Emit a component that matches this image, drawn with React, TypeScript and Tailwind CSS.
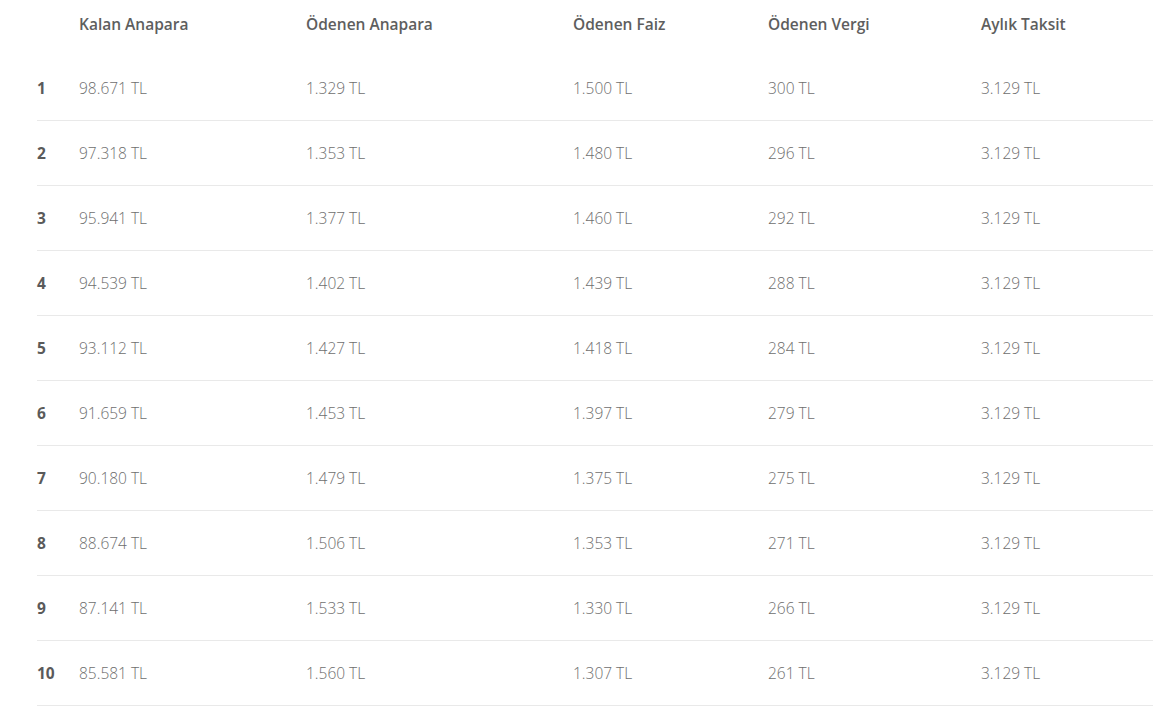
const rows = [
  ['98.671 TL', '1.329 TL', '1.500 TL', '300 TL', '3.129 TL'],
  ['97.318 TL', '1.353 TL', '1.480 TL', '296 TL', '3.129 TL'],
  ['95.941 TL', '1.377 TL', '1.460 TL', '292 TL', '3.129 TL'],
  ['94.539 TL', '1.402 TL', '1.439 TL', '288 TL', '3.129 TL'],
  ['93.112 TL', '1.427 TL', '1.418 TL', '284 TL', '3.129 TL'],
  ['91.659 TL', '1.453 TL', '1.397 TL', '279 TL', '3.129 TL'],
  ['90.180 TL', '1.479 TL', '1.375 TL', '275 TL', '3.129 TL'],
  ['88.674 TL', '1.506 TL', '1.353 TL', '271 TL', '3.129 TL'],
  ['87.141 TL', '1.533 TL', '1.330 TL', '266 TL', '3.129 TL'],
  ['85.581 TL', '1.560 TL', '1.307 TL', '261 TL', '3.129 TL'],
]

const headers = ['Kalan Anapara', 'Ödenen Anapara', 'Ödenen Faiz', 'Ödenen Vergi', 'Aylık Taksit']

// sütun genişlikleri
const cols = 'grid grid-cols-[42px_227px_267px_195px_213px_172px]'

export default function App() {
  return (
    <div className="min-h-screen bg-white pl-[37px] font-['Open_Sans',sans-serif]">
      <div className={`${cols} h-[56px] pt-[13px] text-[15.5px] font-semibold text-[#5e5e5e] leading-[22px]`}>
        <div />
        {headers.map((h) => (
          <div key={h}>{h}</div>
        ))}
      </div>
      {rows.map((r, i) => (
        <div
          key={i}
          className={`${cols} h-[65px] items-center border-b border-[#e9e9e9] text-[15.5px] leading-[22px]`}
        >
          <div className="font-bold text-[#5a5a5a]">{i + 1}</div>
          {r.map((v, j) => (
            <div key={j} className="font-light text-[#6e6e6e]">
              {v}
            </div>
          ))}
        </div>
      ))}
    </div>
  )
}
